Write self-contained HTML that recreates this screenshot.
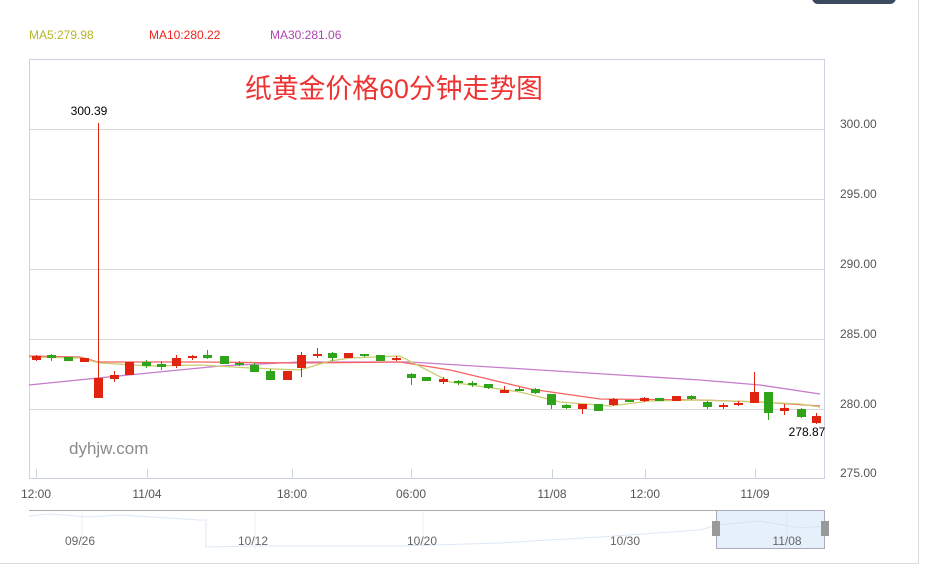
<!DOCTYPE html>
<html><head><meta charset="utf-8"><style>
html,body{margin:0;padding:0;background:#fff;width:926px;height:565px;overflow:hidden}
svg{display:block;font-family:"Liberation Sans","Noto Sans CJK SC",sans-serif}
</style></head><body>
<svg id="s" width="926" height="565" xmlns="http://www.w3.org/2000/svg">
<rect x="812" y="-8" width="84" height="12" rx="6" fill="#3c4a60"/>
<line x1="918.5" y1="0" x2="918.5" y2="563" stroke="#ddd"/>
<line x1="0" y1="563.5" x2="919" y2="563.5" stroke="#ddd"/>
<text x="29" y="39" font-size="12" fill="#b5b52a">MA5:279.98</text>
<text x="149" y="39" font-size="12" fill="#f0221b">MA10:280.22</text>
<text x="270" y="39" font-size="12" fill="#b044b0">MA30:281.06</text>
<rect x="29.5" y="59.5" width="795" height="419" fill="none" stroke="#ccd3de"/>
<g stroke="#d8d8d8">
<line x1="30" y1="129.5" x2="824" y2="129.5"/><line x1="30" y1="199.5" x2="824" y2="199.5"/>
<line x1="30" y1="269.5" x2="824" y2="269.5"/><line x1="30" y1="339.5" x2="824" y2="339.5"/>
<line x1="30" y1="409.5" x2="824" y2="409.5"/>
</g>
<g stroke="#ccd3de">
<line x1="36.5" y1="469" x2="36.5" y2="478"/><line x1="147.5" y1="469" x2="147.5" y2="478"/>
<line x1="292.5" y1="469" x2="292.5" y2="478"/><line x1="411.5" y1="469" x2="411.5" y2="478"/>
<line x1="552.5" y1="469" x2="552.5" y2="478"/><line x1="645.5" y1="469" x2="645.5" y2="478"/>
<line x1="755.5" y1="469" x2="755.5" y2="478"/>
</g>
<text x="394" y="98" font-size="27" fill="#ee3333" text-anchor="middle" textLength="298" lengthAdjust="spacingAndGlyphs">纸黄金价格60分钟走势图</text>
<g font-size="12" fill="#555">
<text x="840" y="128">300.00</text><text x="840" y="198">295.00</text>
<text x="840" y="268">290.00</text><text x="840" y="338">285.00</text>
<text x="840" y="408">280.00</text><text x="840" y="477">275.00</text>
</g>
<g font-size="12" fill="#555" text-anchor="middle">
<text x="36" y="498">12:00</text><text x="147" y="498">11/04</text><text x="292" y="498">18:00</text>
<text x="411" y="498">06:00</text><text x="552" y="498">11/08</text><text x="645" y="498">12:00</text>
<text x="755" y="498">11/09</text>
</g>
<text x="69" y="454" font-size="17" fill="#8a8a8a">dyhjw.com</text>
<text x="89" y="115" font-size="12" fill="#000" text-anchor="middle">300.39</text>
<text x="807" y="436" font-size="12" fill="#000" text-anchor="middle">278.87</text>
<polyline fill="none" stroke="#c77ccc" stroke-width="1.3" points="29,385 98,378 220,366 300,362 410,362 540,370 700,380 760,385 820,394"/>
<polyline fill="none" stroke="#f56262" stroke-width="1.3" points="29,356 80,357 98,362 200,362 300,363 400,362 450,370 530,389 600,399 700,400 760,402 820,406"/>
<polyline fill="none" stroke="#cccc70" stroke-width="1.3" points="29,357 80,358 100,363 150,366 200,365 250,368 300,370 330,361 350,358 400,356 450,382 520,392 560,402 610,406 650,401 700,400 760,402 800,404 820,407"/>
<g id="c"></g>
<line x1="29" y1="510.5" x2="825" y2="510.5" stroke="#aaa"/>
<polyline fill="none" stroke="#dde8f5" points="29,516 50,514 90,517 120,515 200,520 206,520 206,547 250,546 300,546 400,546 500,543 600,537 700,530 717,525 760,521 800,528 825,526"/>
<g stroke="#eee"><line x1="82" y1="512" x2="82" y2="549"/><line x1="255" y1="512" x2="255" y2="549"/><line x1="423" y1="512" x2="423" y2="549"/><line x1="787" y1="512" x2="787" y2="549"/></g>
<rect x="716.5" y="510.5" width="108" height="38" fill="rgba(200,222,245,0.45)" stroke="#aab"/>
<rect x="712" y="521" width="8" height="15" fill="#999"/><rect x="821" y="521" width="8" height="15" fill="#999"/>
<g font-size="12" fill="#666" text-anchor="middle">
<text x="80" y="545">09/26</text><text x="253" y="545">10/12</text><text x="422" y="545">10/20</text>
<text x="625" y="545">10/30</text><text x="787" y="545">11/08</text>
</g>
</svg>
<script>
var d=[[36,356,360,'r',355,361],[51,355,358,'g',354,361],[68,357,361,'g'],[84,358,362,'r'],[98,378,398,'r',123,398],[114,375,379,'r',371,382],[129,362,375,'r'],[146,362,366,'g',360,368],[161,364,367,'g',361,370],[176,358,366,'r',355,368],[192,356,358,'r',355,360],[207,355,358,'g',350,359],[224,356,364,'g'],[239,363,364,'g',361,366],[254,365,372,'g',363,372],[270,371,380,'g',369,380],[287,371,380,'r'],[301,355,368,'r',352,377],[317,354,356,'r',348,358],[332,353,358,'g',352,361],[348,353,358,'r'],[364,354,356,'g',354,357],[380,355,361,'g'],[396,358,360,'r',356,361],[411,374,378,'g',373,385],[426,377,381,'g'],[443,379,382,'r',377,384],[458,381,383,'g',380,385],[472,383,385,'g',381,387],[488,384,388,'g',384,389],[504,390,393,'r',386,393],[519,389,390,'g',387,391],[535,389,393,'g',388,394],[551,394,405,'g',394,409],[566,405,408,'g',404,409],[582,404,409,'r',404,414],[598,404,411,'g'],[613,399,405,'r',398,406],[629,400,401,'g'],[644,398,401,'r',397,402],[659,398,401,'g'],[676,396,401,'r'],[691,396,399,'g',395,400],[707,402,407,'g',401,409],[723,405,407,'r',403,409],[738,403,405,'r',401,406],[754,392,403,'r',372,403],[768,392,413,'g',392,420],[784,408,411,'r',404,415],[801,409,417,'g',408,418],[816,416,423,'r',413,424]];
var s='';d.forEach(function(c){var col=c[3]=='r'?'#e0240f':'#2fa31a';var wt=c[4]||c[1],wb=c[5]||c[2];
s+='<line x1="'+(c[0]+.5)+'" y1="'+wt+'" x2="'+(c[0]+.5)+'" y2="'+wb+'" stroke="'+col+'"/>';
s+='<rect x="'+(c[0]-4)+'" y="'+c[1]+'" width="9" height="'+Math.max(2,c[2]-c[1])+'" fill="'+col+'"/>';});
document.getElementById('c').innerHTML=s;
</script>
</body></html>
